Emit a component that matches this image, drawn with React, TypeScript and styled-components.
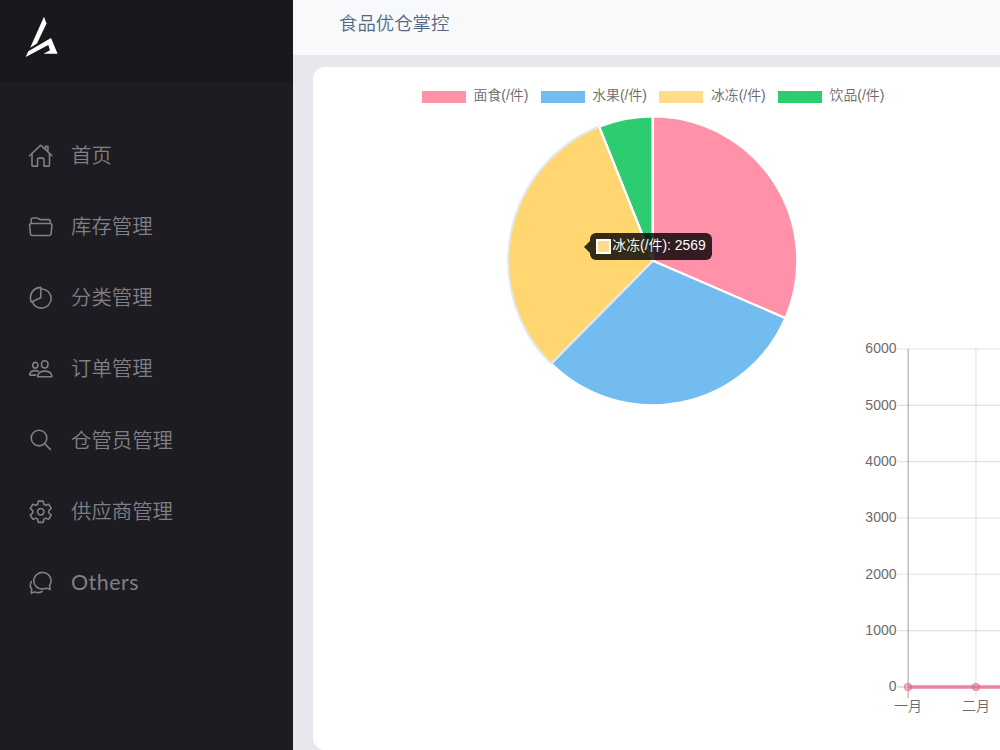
import React from 'react';
import styled, { createGlobalStyle } from 'styled-components';
import {
  IoHomeOutline,
  IoFolderOpenOutline,
  IoPieChartOutline,
  IoPeopleOutline,
  IoSearchOutline,
  IoSettingsOutline,
  IoChatbubblesOutline,
} from 'react-icons/io5';

const GlobalStyle = createGlobalStyle`
  * { box-sizing: border-box; }
  body { margin: 0; overflow: hidden; background: #e9e7ed; }
`;

const chartFont = '"Liberation Sans", "Noto Sans CJK SC", sans-serif';

const Page = styled.div`
  display: flex;
  width: 1000px;
  height: 750px;
  overflow: hidden;
  font-family: Lato, 'Noto Sans CJK SC', sans-serif;
`;

const Sidebar = styled.aside`
  flex: 0 0 293px;
  background: #1d1c22;
`;

const Brand = styled.div`
  height: 82px;
  padding: 16px 0 0 25px;
  background: #19181c;
  svg { display: block; }
`;

const Menu = styled.nav`
  display: flex;
  flex-direction: column;
  padding-top: 37.8px;
`;

const MenuItem = styled.a`
  display: flex;
  align-items: center;
  gap: 18px;
  height: 71.2px;
  padding-left: 27.5px;
  color: #807f83;
  svg { width: 25.5px; height: 25.5px; flex: none; }
`;

const MenuLabel = styled.span<{ $latin?: boolean }>`
  font-size: ${(p) => (p.$latin ? 21.4 : 20.4)}px;
  letter-spacing: ${(p) => (p.$latin ? 0.5 : 0)}px;
  font-weight: ${(p) => (p.$latin ? 400 : 350)};
  line-height: 30px;
  padding-bottom: 1px;
  white-space: nowrap;
`;

const Main = styled.main`
  flex: 1;
  min-width: 0;
  display: flex;
  flex-direction: column;
`;

const Header = styled.header`
  flex: 0 0 55px;
  padding: 9px 0 0 46px;
  background: #f8f9fb;
  color: #566881;
  font-size: 18.4px;
  font-weight: 350;
  line-height: 28px;
`;

const Card = styled.section`
  flex: 1;
  display: flex;
  margin: 12px 0 0 19.5px;
  padding-top: 19px;
  border-radius: 12px 0 0 12px;
  background: #fff;
  font-family: ${chartFont};
  overflow: hidden;
`;

const PieColumn = styled.div`
  flex: 0 0 537.5px;
  min-width: 0;
`;

const Legend = styled.div`
  display: flex;
  height: 18px;
  padding-left: 109.5px;
`;

const LegendItem = styled.div`
  display: flex;
  align-items: center;
  flex: 0 0 118.7px;
  gap: 7.5px;
  color: #6b6b6b;
  font-size: 13.9px;
  font-weight: 350;
  line-height: 18px;
  white-space: nowrap;
`;

const Swatch = styled.i<{ $color: string }>`
  width: 44px;
  height: 12px;
  margin-top: 3px;
  background: ${(p) => p.$color};
`;

const PieArea = styled.div`
  position: relative;
  width: 300px;
  height: 300px;
  margin: 7px 0 0 190.1px;
  svg { display: block; }
`;

const Tooltip = styled.div`
  position: absolute;
  left: 87px;
  top: 122px;
  display: flex;
  align-items: center;
  width: 122.5px;
  height: 27px;
  padding-left: 6px;
  gap: 1.7px;
  border-radius: 6px;
  background: rgba(0, 0, 0, 0.8);
  color: #fff;
  font-size: 13.9px;
  font-weight: 350;
  line-height: 25px;
  white-space: nowrap;
  &::before {
    content: '';
    position: absolute;
    left: -6px;
    top: 8px;
    border-style: solid;
    border-width: 6px 6px 6px 0;
    border-color: transparent rgba(0, 0, 0, 0.8) transparent transparent;
  }
`;

const TooltipText = styled.span`
  height: 27px;
`;

const TooltipSwatch = styled.i`
  width: 15px;
  height: 15px;
  border: 2px solid #fff;
  background: #ffdc88;
`;

const LineColumn = styled.div`
  flex: 1;
  min-width: 0;
  padding-top: 244px;
  svg { display: block; }
`;

const AxisText = styled.text`
  font-family: ${chartFont};
  font-size: 14px;
  font-weight: 350;
  fill: #6b6b6b;
`;

const menu = [
  { label: '首页', Icon: IoHomeOutline },
  { label: '库存管理', Icon: IoFolderOpenOutline },
  { label: '分类管理', Icon: IoPieChartOutline },
  { label: '订单管理', Icon: IoPeopleOutline },
  { label: '仓管员管理', Icon: IoSearchOutline },
  { label: '供应商管理', Icon: IoSettingsOutline },
  { label: 'Others', Icon: IoChatbubblesOutline, latin: true },
];

const legend = [
  { label: '面食(/件)', color: '#ff91a9' },
  { label: '水果(/件)', color: '#72bcef' },
  { label: '冰冻(/件)', color: '#ffdc88' },
  { label: '饮品(/件)', color: '#2ecc71' },
];

const slices = [
  { from: 0, to: 113.4, color: '#ff91a9', stroke: '#fff' },
  { from: 113.4, to: 224.7, color: '#72bcef', stroke: '#fff' },
  { from: 338.2, to: 360, color: '#2ecc71', stroke: '#fff' },
  { from: 224.7, to: 338.2, color: '#ffd670', stroke: '#e4e6e8' },
];

function slicePath(from: number, to: number) {
  const point = (deg: number) => {
    const a = (deg * Math.PI) / 180;
    return `${149.8 + 144.5 * Math.sin(a)} ${149.8 - 144.5 * Math.cos(a)}`;
  };
  return `M149.8 149.8L${point(from)}A144.5 144.5 0 0 1 ${point(to)}Z`;
}

function Pie() {
  return (
    <svg width="300" height="300" viewBox="0 0 300 300">
      {slices.map((s) => (
        <path key={s.from} d={slicePath(s.from, s.to)} fill={s.color} stroke={s.stroke} strokeWidth="2.2" strokeLinejoin="bevel" />
      ))}
      <path d="M149.8 149.8V5.3M149.8 149.8L96.1 15.6" stroke="#fff" strokeWidth="2.2" />
    </svg>
  );
}

const ticks = [6000, 5000, 4000, 3000, 2000, 1000, 0];

function LineChart() {
  return (
    <svg width="150" height="400" viewBox="850 330 150 400">
      {ticks.map((t, i) => {
        const y = 349 + i * 56.33;
        return (
          <g key={t}>
            <line x1="897.5" x2="1000" y1={y} y2={y} stroke="#000" strokeOpacity={t === 0 ? 0.25 : 0.11} strokeWidth="1.1" />
            <AxisText x="896.5" y={y + 4.3} textAnchor="end">{t}</AxisText>
          </g>
        );
      })}
      <line x1="908.2" x2="908.2" y1="349" y2="698" stroke="#000" strokeOpacity="0.25" strokeWidth="1.5" />
      <line x1="975.9" x2="975.9" y1="349" y2="698" stroke="#000" strokeOpacity="0.1" strokeWidth="1.2" />
      <line x1="908" x2="1000" y1="687" y2="687" stroke="#ee829c" strokeWidth="3.3" />
      {[908, 975.9].map((x) => (
        <circle key={x} cx={x} cy="687" r="3.5" fill="#e66a88" fillOpacity="0.4" stroke="#df6581" strokeOpacity="0.75" strokeWidth="1.1" />
      ))}
      <AxisText x="908" y="711" textAnchor="middle">一月</AxisText>
      <AxisText x="976" y="711" textAnchor="middle">二月</AxisText>
    </svg>
  );
}

function Logo() {
  return (
    <svg width="34" height="42" viewBox="25 16 34 42" fill="#fff">
      <path d="M44 16.8L46.5 23.5L37 43.4L30.2 47.8Z" />
      <path d="M25.7 57L28.3 51.2L51 38L57.6 53.8H43.5L50 50.3L48.3 45Z" />
    </svg>
  );
}

export default function App() {
  return (
    <Page>
      <GlobalStyle />
      <Sidebar>
        <Brand><Logo /></Brand>
        <Menu>
          {menu.map(({ label, Icon, latin }) => (
            <MenuItem key={label}>
              <Icon />
              <MenuLabel $latin={latin}>{label}</MenuLabel>
            </MenuItem>
          ))}
        </Menu>
      </Sidebar>
      <Main>
        <Header>食品优仓掌控</Header>
        <Card>
          <PieColumn>
            <Legend>
              {legend.map((l) => (
                <LegendItem key={l.label}>
                  <Swatch $color={l.color} />
                  {l.label}
                </LegendItem>
              ))}
            </Legend>
            <PieArea>
              <Pie />
              <Tooltip>
                <TooltipSwatch />
                <TooltipText>冰冻(/件): 2569</TooltipText>
              </Tooltip>
            </PieArea>
          </PieColumn>
          <LineColumn>
            <LineChart />
          </LineColumn>
        </Card>
      </Main>
    </Page>
  );
}
